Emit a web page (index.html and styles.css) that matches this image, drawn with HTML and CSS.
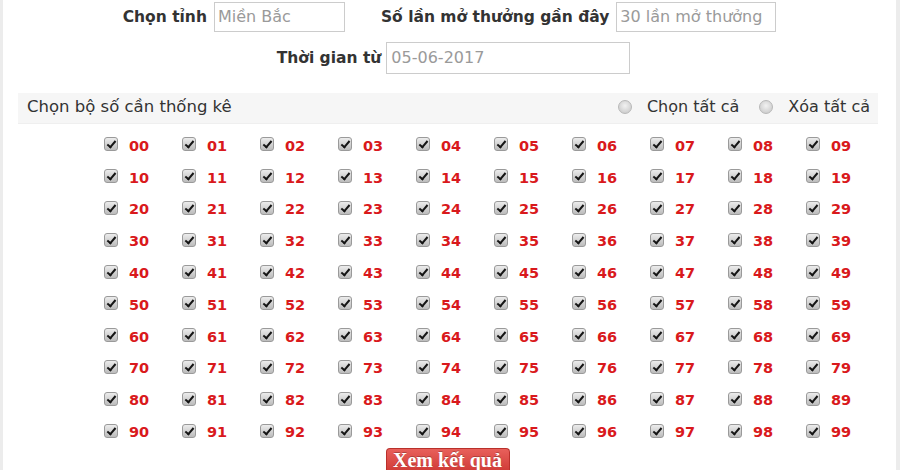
FILE: index.html
```html
<!DOCTYPE html>
<html lang="vi">
<head>
<meta charset="utf-8">
<title>Thống kê</title>
<link rel="stylesheet" href="styles.css">
</head>
<body>
<div class="wrap">
  <div class="form-row row1">
    <span class="lbl">Chọn tỉnh</span>
    <span class="inp inp-tinh">Miền Bắc</span>
    <span class="lbl lbl-so">Số lần mở thưởng gần đây</span>
    <span class="inp inp-so">30 lần mở thưởng</span>
  </div>
  <div class="form-row row2">
    <span class="lbl">Thời gian từ</span>
    <span class="inp inp-date">05-06-2017</span>
  </div>
  <div class="band">
    <span class="band-title">Chọn bộ số cần thống kê</span>
    <span class="band-opts">
      <span class="opt"><span class="radio"></span>Chọn tất cả</span>
      <span class="opt"><span class="radio"></span>Xóa tất cả</span>
    </span>
  </div>
  <div class="grid">
    <span class="num"><span class="cb"></span>00</span><span class="num"><span class="cb"></span>01</span><span class="num"><span class="cb"></span>02</span><span class="num"><span class="cb"></span>03</span><span class="num"><span class="cb"></span>04</span><span class="num"><span class="cb"></span>05</span><span class="num"><span class="cb"></span>06</span><span class="num"><span class="cb"></span>07</span><span class="num"><span class="cb"></span>08</span><span class="num"><span class="cb"></span>09</span>
    <span class="num"><span class="cb"></span>10</span><span class="num"><span class="cb"></span>11</span><span class="num"><span class="cb"></span>12</span><span class="num"><span class="cb"></span>13</span><span class="num"><span class="cb"></span>14</span><span class="num"><span class="cb"></span>15</span><span class="num"><span class="cb"></span>16</span><span class="num"><span class="cb"></span>17</span><span class="num"><span class="cb"></span>18</span><span class="num"><span class="cb"></span>19</span>
    <span class="num"><span class="cb"></span>20</span><span class="num"><span class="cb"></span>21</span><span class="num"><span class="cb"></span>22</span><span class="num"><span class="cb"></span>23</span><span class="num"><span class="cb"></span>24</span><span class="num"><span class="cb"></span>25</span><span class="num"><span class="cb"></span>26</span><span class="num"><span class="cb"></span>27</span><span class="num"><span class="cb"></span>28</span><span class="num"><span class="cb"></span>29</span>
    <span class="num"><span class="cb"></span>30</span><span class="num"><span class="cb"></span>31</span><span class="num"><span class="cb"></span>32</span><span class="num"><span class="cb"></span>33</span><span class="num"><span class="cb"></span>34</span><span class="num"><span class="cb"></span>35</span><span class="num"><span class="cb"></span>36</span><span class="num"><span class="cb"></span>37</span><span class="num"><span class="cb"></span>38</span><span class="num"><span class="cb"></span>39</span>
    <span class="num"><span class="cb"></span>40</span><span class="num"><span class="cb"></span>41</span><span class="num"><span class="cb"></span>42</span><span class="num"><span class="cb"></span>43</span><span class="num"><span class="cb"></span>44</span><span class="num"><span class="cb"></span>45</span><span class="num"><span class="cb"></span>46</span><span class="num"><span class="cb"></span>47</span><span class="num"><span class="cb"></span>48</span><span class="num"><span class="cb"></span>49</span>
    <span class="num"><span class="cb"></span>50</span><span class="num"><span class="cb"></span>51</span><span class="num"><span class="cb"></span>52</span><span class="num"><span class="cb"></span>53</span><span class="num"><span class="cb"></span>54</span><span class="num"><span class="cb"></span>55</span><span class="num"><span class="cb"></span>56</span><span class="num"><span class="cb"></span>57</span><span class="num"><span class="cb"></span>58</span><span class="num"><span class="cb"></span>59</span>
    <span class="num"><span class="cb"></span>60</span><span class="num"><span class="cb"></span>61</span><span class="num"><span class="cb"></span>62</span><span class="num"><span class="cb"></span>63</span><span class="num"><span class="cb"></span>64</span><span class="num"><span class="cb"></span>65</span><span class="num"><span class="cb"></span>66</span><span class="num"><span class="cb"></span>67</span><span class="num"><span class="cb"></span>68</span><span class="num"><span class="cb"></span>69</span>
    <span class="num"><span class="cb"></span>70</span><span class="num"><span class="cb"></span>71</span><span class="num"><span class="cb"></span>72</span><span class="num"><span class="cb"></span>73</span><span class="num"><span class="cb"></span>74</span><span class="num"><span class="cb"></span>75</span><span class="num"><span class="cb"></span>76</span><span class="num"><span class="cb"></span>77</span><span class="num"><span class="cb"></span>78</span><span class="num"><span class="cb"></span>79</span>
    <span class="num"><span class="cb"></span>80</span><span class="num"><span class="cb"></span>81</span><span class="num"><span class="cb"></span>82</span><span class="num"><span class="cb"></span>83</span><span class="num"><span class="cb"></span>84</span><span class="num"><span class="cb"></span>85</span><span class="num"><span class="cb"></span>86</span><span class="num"><span class="cb"></span>87</span><span class="num"><span class="cb"></span>88</span><span class="num"><span class="cb"></span>89</span>
    <span class="num"><span class="cb"></span>90</span><span class="num"><span class="cb"></span>91</span><span class="num"><span class="cb"></span>92</span><span class="num"><span class="cb"></span>93</span><span class="num"><span class="cb"></span>94</span><span class="num"><span class="cb"></span>95</span><span class="num"><span class="cb"></span>96</span><span class="num"><span class="cb"></span>97</span><span class="num"><span class="cb"></span>98</span><span class="num"><span class="cb"></span>99</span>
  </div>
  <div class="actions">
    <span class="btn">Xem kết quả</span>
  </div>
</div>
</body>
</html>
```

FILE: styles.css
```css
html, body {
  margin: 0;
  padding: 0;
  background: #fff;
}
body {
  font-family: "DejaVu Sans", Verdana, sans-serif;
  color: #333;
  overflow: hidden;
}
.wrap {
  width: 900px;
  height: 470px;
  box-sizing: border-box;
  border-left: 3px solid #ececec;
  border-right: 4px solid #ececec;
  padding: 2px 15px 0 15px;
}
.form-row {
  display: flex;
  align-items: center;
  justify-content: center;
}
.row1 {
  height: 30px;
}
.row2 {
  height: 32px;
  margin-top: 10px;
  padding-left: 8px;
}
.lbl {
  font-size: 15.5px;
  font-weight: bold;
  color: #333;
  margin-right: 7px;
  white-space: nowrap;
}
.lbl-so {
  margin-left: 36px;
}
.row2 .lbl {
  margin-right: 5px;
}
.inp {
  box-sizing: border-box;
  height: 30px;
  border: 1px solid #ccc;
  color: #9a9a9a;
  font-size: 16px;
  line-height: 28px;
  padding-left: 3px;
  white-space: nowrap;
  overflow: hidden;
}
.inp-tinh { width: 131px; }
.inp-so { width: 160px; }
.inp-date { width: 244px; height: 32px; line-height: 30px; padding-left: 4px; }
.band {
  margin-top: 19px;
  height: 31px;
  box-sizing: border-box;
  padding: 0 8px 3px 9px;
  background: #f6f6f6;
  border-bottom: 1px solid #efefef;
  display: flex;
  align-items: center;
  justify-content: space-between;
  margin-right: 3px;
}
.band-title {
  font-size: 16.5px;
  color: #333;
  white-space: nowrap;
}
.band-opts {
  display: flex;
  align-items: center;
  gap: 20px;
}
.opt {
  display: flex;
  align-items: center;
  font-size: 16px;
  color: #333;
  white-space: nowrap;
}
.radio {
  box-sizing: border-box;
  width: 14px;
  height: 14px;
  border-radius: 50%;
  border: 1px solid #b8b8b8;
  background: radial-gradient(circle at 50% 40%, #f2f2f2 0%, #d6d6d6 60%, #c4c4c4 100%);
  margin-right: 15px;
}
.grid {
  margin-top: 6px;
  padding-left: 86px;
  display: grid;
  grid-template-columns: repeat(10, 78px);
  grid-auto-rows: 31.8px;
}
.num {
  display: flex;
  align-items: center;
  font-size: 14.5px;
  font-weight: bold;
  color: #d9191c;
}
.cb {
  position: relative;
  box-sizing: border-box;
  width: 14px;
  height: 14px;
  border: 1px solid #9a9a9a;
  border-radius: 3px;
  background: linear-gradient(#ececec, #bcbcbc);
  margin-right: 11px;
  margin-top: -3px;
}
.cb::after {
  content: "";
  position: absolute;
  left: 4px;
  top: 1px;
  width: 3px;
  height: 7px;
  border-right: 2.5px solid #151515;
  border-bottom: 2.5px solid #151515;
  transform: rotate(40deg);
}
.actions {
  display: flex;
  justify-content: center;
  padding-right: 4px;
}
.btn {
  box-sizing: border-box;
  width: 124px;
  height: 24px;
  border: 1px solid #b9302b;
  border-bottom: 0;
  border-radius: 4px 4px 0 0;
  background: linear-gradient(#e8605b, #cf3a35);
  color: #fff;
  font-family: "Liberation Serif", "Times New Roman", serif;
  font-weight: bold;
  font-size: 20px;
  text-align: center;
  line-height: 22px;
  text-shadow: 0 -1px 0 rgba(0,0,0,0.25);
  white-space: nowrap;
}
```
